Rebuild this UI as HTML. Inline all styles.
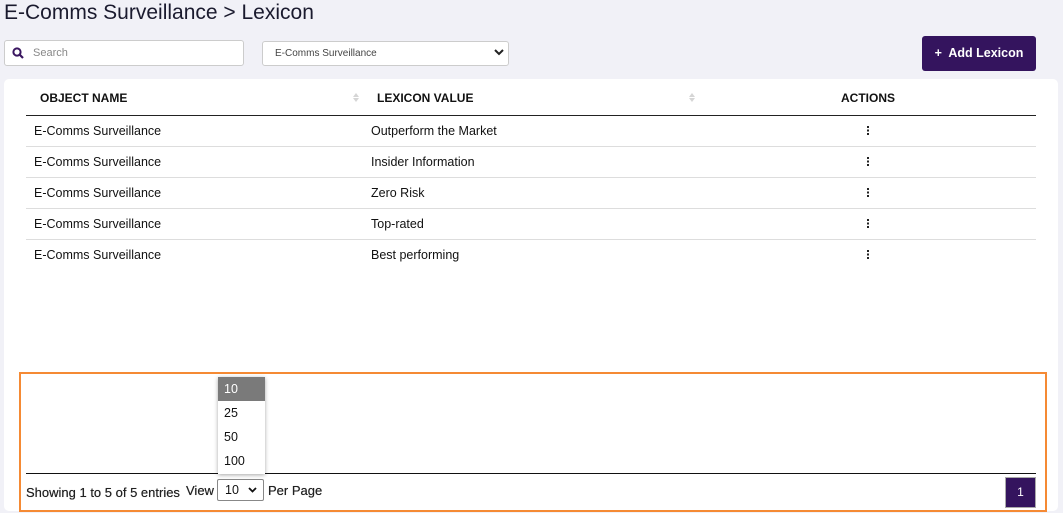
<!DOCTYPE html>
<html><head><style>
*{box-sizing:border-box;margin:0;padding:0}
body{width:1063px;height:513px;background:#f1f1f7;font-family:"Liberation Sans",sans-serif;position:relative;overflow:hidden;color:#111}
.abs{position:absolute}
h1{position:absolute;left:4px;top:1px;font-size:21px;font-weight:normal;color:#1a1a2e}
.inp{border:1px solid #ccc;border-radius:3px;background:#fff}
.card{left:4px;top:79px;width:1054px;height:432px;background:#fff;border-radius:5px}
.th{top:91px;font-size:12px;font-weight:bold;color:#111}
.row{left:26px;width:1010px;height:31px;border-bottom:1px solid #ddd;font-size:12.5px}
.row span{position:absolute;top:8px}
.dots{position:absolute;left:841px;top:10px;width:2px;height:9px;background:linear-gradient(#222 0 2px,transparent 2px 3.5px,#222 3.5px 5.5px,transparent 5.5px 7px,#222 7px)}
.sa{position:absolute;width:0;height:0;border-left:3px solid transparent;border-right:3px solid transparent}
</style></head><body>
<h1>E-Comms Surveillance &gt; Lexicon</h1>
<div class="abs inp" style="left:4px;top:40px;width:240px;height:26px"></div>
<svg class="abs" style="left:12px;top:47px" width="12" height="12" viewBox="0 0 12 12"><circle cx="5" cy="5" r="3.6" fill="none" stroke="#3a1660" stroke-width="2"/><path d="M7.5 7.5L11 11" stroke="#3a1660" stroke-width="2.2"/></svg>
<div class="abs" style="left:33px;top:47px;font-size:11px;color:#888">Search</div>
<div class="abs inp" style="left:262px;top:41px;width:247px;height:25px"></div>
<div class="abs" style="left:275px;top:48px;font-size:10px;color:#444">E-Comms Surveillance</div>
<svg class="abs" style="left:494px;top:49px" width="10" height="7" viewBox="0 0 10 7"><path d="M1 1l4 4 4-4" stroke="#222" stroke-width="2" fill="none"/></svg>
<div class="abs" style="left:922px;top:36px;width:114px;height:35px;background:#34145e;border-radius:3px;color:#fff;font-size:12.5px;font-weight:bold;line-height:35px;text-align:center">+&nbsp; Add Lexicon</div>
<div class="abs card"></div>
<div class="abs th" style="left:40px">OBJECT NAME</div>
<div class="abs th" style="left:377px">LEXICON VALUE</div>
<div class="abs th" style="left:841px">ACTIONS</div>
<i class="sa" style="left:353px;top:93px;border-bottom:4px solid #d5d5d5"></i>
<i class="sa" style="left:353px;top:98px;border-top:4px solid #d5d5d5"></i>
<i class="sa" style="left:689px;top:93px;border-bottom:4px solid #d5d5d5"></i>
<i class="sa" style="left:689px;top:98px;border-top:4px solid #d5d5d5"></i>
<div class="abs" style="left:26px;top:115px;width:1010px;height:1px;background:#222"></div>
<div class="abs row" style="top:116px"><span style="left:8px">E-Comms Surveillance</span><span style="left:345px">Outperform the Market</span><i class="dots"></i></div>
<div class="abs row" style="top:147px"><span style="left:8px">E-Comms Surveillance</span><span style="left:345px">Insider Information</span><i class="dots"></i></div>
<div class="abs row" style="top:178px"><span style="left:8px">E-Comms Surveillance</span><span style="left:345px">Zero Risk</span><i class="dots"></i></div>
<div class="abs row" style="top:209px"><span style="left:8px">E-Comms Surveillance</span><span style="left:345px">Top-rated</span><i class="dots"></i></div>
<div class="abs row" style="top:240px;border-bottom:none"><span style="left:8px">E-Comms Surveillance</span><span style="left:345px">Best performing</span><i class="dots"></i></div>
<div class="abs" style="left:19px;top:372px;width:1028px;height:140px;border:2px solid #f58a34"></div>
<div class="abs" style="left:26px;top:473px;width:1010px;height:1px;background:#111"></div>
<div class="abs" style="left:26px;top:485px;font-size:13px;color:#222;text-shadow:0 0 0.4px #222">Showing 1 to 5 of 5 entries</div>
<div class="abs" style="left:186px;top:483px;font-size:13px;color:#222;text-shadow:0 0 0.4px #222">View</div>
<div class="abs" style="left:217px;top:479px;width:47px;height:22px;border:1px solid #888;border-radius:2px;background:#fff;font-size:12.5px;padding:3px 0 0 7px">10</div>
<svg class="abs" style="left:248px;top:487px" width="9" height="6" viewBox="0 0 9 6"><path d="M1 1l3.5 3.5L8 1" stroke="#111" stroke-width="1.8" fill="none"/></svg>
<div class="abs" style="left:268px;top:483px;font-size:13px;color:#222;text-shadow:0 0 0.4px #222">Per Page</div>
<div class="abs" style="left:1005px;top:477px;width:31px;height:31px;background:#34145e;border:1px solid #aaa;color:#fff;font-size:12px;text-align:center;line-height:29px">1</div>
<div class="abs" style="left:218px;top:377px;width:47px;height:97px;background:#fff;box-shadow:0 1px 4px rgba(0,0,0,.35);font-size:12.5px">
<div style="height:24px;background:#7a7a7a;color:#fff;padding:5px 0 0 6px">10</div>
<div style="height:24px;padding:5px 0 0 6px">25</div>
<div style="height:24px;padding:5px 0 0 6px">50</div>
<div style="height:24px;padding:5px 0 0 6px">100</div>
</div>
</body></html>
